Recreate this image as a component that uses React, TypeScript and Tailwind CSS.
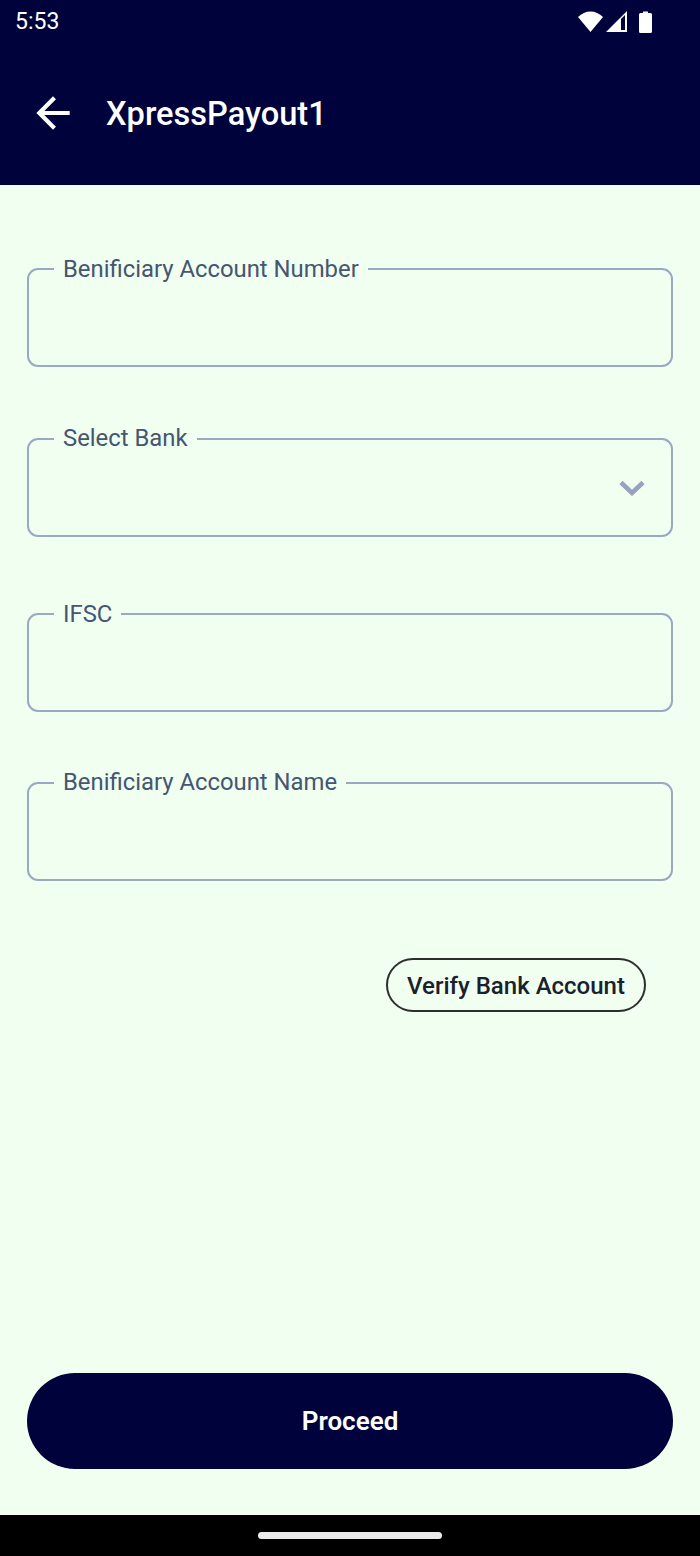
function Field({ label, mt, labelTop, chevron }: { label: string; mt: string; labelTop: string; chevron?: boolean }) {
  return (
    <div className={`relative h-[99px] rounded-[11px] border-2 border-[#9aa8c4] ${mt}`}>
      <span className={`absolute left-[25px] bg-[#f0fff0] px-[9px] text-[23.85px] leading-[34px] text-[#465570] ${labelTop}`}>
        {label}
      </span>
      {chevron && (
        <div className="flex h-full items-center justify-end pr-[26px]">
          <svg width="26" height="16" viewBox="0 0 26 16" fill="none">
            <path d="M2 2.5 L13 13 L24 2.5" stroke="#97a3bd" strokeWidth="4.5" />
          </svg>
        </div>
      )}
    </div>
  )
}

export default function App() {
  return (
    <div className="flex h-[1556px] w-[700px] flex-col bg-[#f0fff0] font-['Roboto',sans-serif]">
      {/* Status bar + app bar */}
      <div className="h-[185px] bg-[#00023b] text-white">
        <div className="flex h-[43px] items-center justify-between pl-[15px] pr-[48px]">
          <span className="text-[23px] leading-none">5:53</span>
          <div className="flex items-center">
            <svg width="25" height="21" viewBox="0 0 25 21">
              <path d="M0 6 C7 -1.5 18 -1.5 25 6 L12.5 21 Z" fill="#fff" />
            </svg>
            <svg width="21" height="21" viewBox="0 0 21 21" className="ml-[3px]">
              <path d="M0 21 L21 0 V21 Z" fill="#fff" />
              <path d="M15 8 L19 4 V19 H15 Z" fill="#00023b" />
            </svg>
            <svg width="13" height="22" viewBox="0 0 13 22" className="ml-[12px]">
              <path d="M4 2 V0.5 H9 V2 H11.5 Q13 2 13 3.5 V20.5 Q13 22 11.5 22 H1.5 Q0 22 0 20.5 V3.5 Q0 2 1.5 2 Z" fill="#fff" />
            </svg>
          </div>
        </div>
        <div className="flex h-[140px] items-center">
          <svg width="50" height="50" viewBox="0 0 24 24" fill="#fff" className="ml-[28px]">
            <path d="M20 11H7.83l5.59-5.59L12 4l-8 8 8 8 1.41-1.41L7.83 13H20v-2z" />
          </svg>
          <span className="ml-[28px] pt-[2px] text-[32.6px] font-medium leading-none">XpressPayout1</span>
        </div>
      </div>

      {/* Form */}
      <div className="px-[27px]">
        <Field label="Benificiary Account Number" mt="mt-[83px]" labelTop="top-[-18px]" />
        <Field label="Select Bank" mt="mt-[71px]" labelTop="top-[-19px]" chevron />
        <Field label="IFSC" mt="mt-[76px]" labelTop="top-[-18px]" />
        <Field label="Benificiary Account Name" mt="mt-[70px]" labelTop="top-[-19px]" />
        <div className="mt-[77px] flex justify-end pr-[27px]">
          <button className="h-[54px] w-[260px] rounded-full border-2 border-[#2d2d2d] pt-[1px] text-[24px] font-medium text-[#1a202c]">
            Verify Bank Account
          </button>
        </div>
        <button className="mt-[361px] h-[96px] w-[646px] rounded-[48px] bg-[#00023b] pt-[1px] text-[26px] font-semibold text-white">
          Proceed
        </button>
      </div>

      {/* Nav bar */}
      <div className="mt-auto flex h-[41px] items-center justify-center bg-black">
        <div className="h-[7px] w-[184px] rounded-full bg-[#ececec]" />
      </div>
    </div>
  )
}
